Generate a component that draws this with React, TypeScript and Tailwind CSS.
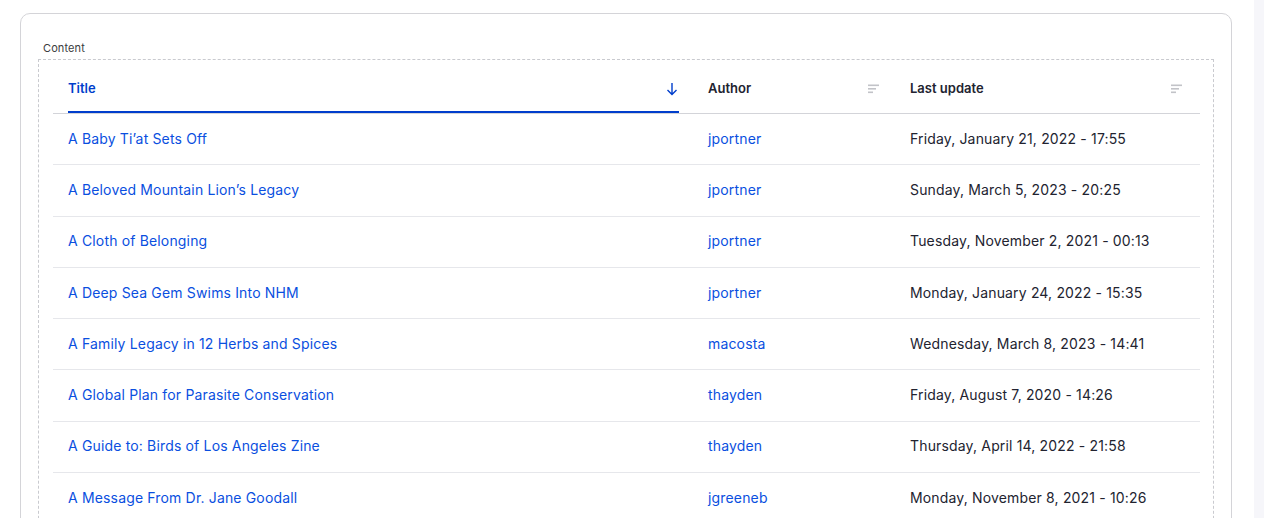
import React from "react"

const rows = [
  ["A Baby Ti’at Sets Off", "jportner", "Friday, January 21, 2022 - 17:55"],
  ["A Beloved Mountain Lion’s Legacy", "jportner", "Sunday, March 5, 2023 - 20:25"],
  ["A Cloth of Belonging", "jportner", "Tuesday, November 2, 2021 - 00:13"],
  ["A Deep Sea Gem Swims Into NHM", "jportner", "Monday, January 24, 2022 - 15:35"],
  ["A Family Legacy in 12 Herbs and Spices", "macosta", "Wednesday, March 8, 2023 - 14:41"],
  ["A Global Plan for Parasite Conservation", "thayden", "Friday, August 7, 2020 - 14:26"],
  ["A Guide to: Birds of Los Angeles Zine", "thayden", "Thursday, April 14, 2022 - 21:58"],
  ["A Message From Dr. Jane Goodall", "jgreeneb", "Monday, November 8, 2021 - 10:26"],
]

function SortIcon() {
  return (
    <svg width="12" height="10" viewBox="0 0 12 10" className="shrink-0">
      <rect x="0" y="0.5" width="11" height="1.6" fill="#c2c3c8" />
      <rect x="0" y="4" width="8" height="1.6" fill="#c2c3c8" />
      <rect x="0" y="7.5" width="5" height="1.6" fill="#c2c3c8" />
    </svg>
  )
}

function ArrowDown() {
  return (
    <svg width="12" height="14" viewBox="0 0 12 14" fill="none" className="shrink-0">
      <path d="M6 1v11.5M1.5 8l4.5 4.5L10.5 8" stroke="#003ecc" strokeWidth="1.4" />
    </svg>
  )
}

export default function App() {
  return (
    <div
      className="flex h-[518px] w-full overflow-hidden bg-white text-[#222330]"
      style={{ fontFamily: "Inter, 'Liberation Sans', sans-serif" }}
    >
      <div className="flex-1 pl-[20px] pr-[22px] pt-[13px]">
        <div className="h-[600px] rounded-t-[10px] border border-[#d4d4d8] px-[17px] pt-[25px]">
          <div className="mb-[2px] pl-[5px] text-[11px] leading-[18px] tracking-[0.1px] text-[#3b3c40]">Content</div>
          <div className="h-[500px] border border-dashed border-[#c9cacf] pl-[14px] pr-[13px]">
            {/* header */}
            <div className="grid h-[54px] grid-cols-[641px_201px_304px] border-b border-[#d3d4d9] text-[13px] font-semibold">
              <div className="px-[15px]">
                <div className="flex h-[53px] items-center justify-between border-b-[2px] border-[#003ecc] pt-[6px] text-[#003ecc]">
                  <span>Title</span>
                  <span className="pr-[1px]">
                    <ArrowDown />
                  </span>
                </div>
              </div>
              <div className="flex items-center justify-between pl-[14px] pr-[15px] pt-[4px]">
                <span>Author</span>
                <SortIcon />
              </div>
              <div className="flex items-center justify-between pl-[15px] pr-[16px] pt-[4px]">
                <span>Last update</span>
                <SortIcon />
              </div>
            </div>
            {rows.map(([title, author, date]) => (
              <div
                key={title}
                className="grid h-[51.3px] grid-cols-[641px_201px_304px] items-center border-b border-[#e6e7eb] pb-[2px] text-[14px] tracking-[0.16px]"
              >
                <div className="px-[15px] text-[#0a4fe0]">{title}</div>
                <div className="pl-[14px] text-[#0a4fe0]">{author}</div>
                <div className="pl-[15px]">{date}</div>
              </div>
            ))}
          </div>
        </div>
      </div>
      <div className="w-[10px] bg-[#f6f6fa]" />
    </div>
  )
}
